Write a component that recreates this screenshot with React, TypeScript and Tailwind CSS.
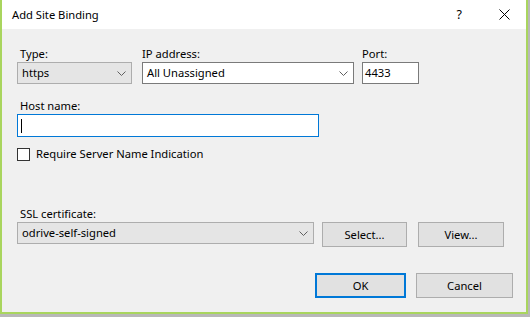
import React from 'react';

const Chevron = () => (
  <svg width="9" height="5" viewBox="0 0 9 5" className="shrink-0">
    <path d="M0.5 0.5 L4.5 4.5 L8.5 0.5" fill="none" stroke="#606060" strokeWidth="1" />
  </svg>
);

const Select = ({ value, white, className }: { value: string; white?: boolean; className: string }) => (
  <div
    className={
      'flex items-center justify-between pl-[4px] pr-[5px] border ' +
      (white ? 'bg-white border-[#7a7a7a] ' : 'bg-[#e5e5e5] border-[#adadad] ') +
      className
    }
  >
    <span>{value}</span>
    <Chevron />
  </div>
);

const Button = ({ label, primary, className }: { label: string; primary?: boolean; className: string }) => (
  <div
    className={
      'flex items-center justify-center bg-[#e1e1e1] ' +
      (primary ? 'border-2 border-[#0078d7] ' : 'border border-[#adadad] ') +
      className
    }
  >
    {label}
  </div>
);

export default function App() {
  return (
    <div
      className="w-[530px] h-[317px] bg-[#b8b8b8] overflow-hidden text-[11.2px] leading-[16px] text-black"
      style={{ fontFamily: '"Noto Sans", "Open Sans", sans-serif' }}
    >
      <div className="w-[528px] h-[314px] flex flex-col border-x-2 border-b-2 border-[#a9d55e] bg-[#f0f0f0]">
        {/* title bar */}
        <div className="h-[29px] bg-white flex items-center pl-[10px] pr-[16px]">
          <span className="flex-1">Add Site Binding</span>
          <span className="mr-[37px] text-[12.5px]">?</span>
          <svg width="11" height="11" viewBox="0 0 11 11">
            <path d="M0.5 0.5 L10.5 10.5 M10.5 0.5 L0.5 10.5" stroke="#000" strokeWidth="1" />
          </svg>
        </div>

        <div className="flex flex-col pl-[15px] pt-[17px]">
          {/* type / ip / port */}
          <div className="flex">
            <div className="flex flex-col w-[115px]">
              <span className="pl-[3px]">Type:</span>
              <Select value="https" className="h-[22px]" />
            </div>
            <div className="flex flex-col w-[212px] ml-[10px]">
              <span>IP address:</span>
              <Select value="All Unassigned" white className="h-[22px]" />
            </div>
            <div className="flex flex-col w-[57px] ml-[8px]">
              <span>Port:</span>
              <div className="h-[22px] bg-white border border-[#7a7a7a] flex items-center pl-[2px]">4433</div>
            </div>
          </div>

          {/* host name */}
          <span className="pl-[3px] mt-[14px]">Host name:</span>
          <div className="w-[302px] h-[23px] bg-white border border-[#0078d7] flex items-center pl-[3px]">
            <div className="w-[1px] h-[14px] bg-black" />
          </div>

          <div className="flex items-center mt-[9px]">
            <div className="w-[13px] h-[13px] bg-white border border-[#333333]" />
            <span className="ml-[6px]">Require Server Name Indication</span>
          </div>

          {/* ssl */}
          <span className="pl-[3px] mt-[44px]">SSL certificate:</span>
          <div className="flex items-start">
            <Select value="odrive-self-signed" className="w-[297px] h-[22px]" />
            <Button label="Select..." className="w-[85px] h-[25px] ml-[8px]" />
            <Button label="View..." className="w-[86px] h-[25px] ml-[11px]" />
          </div>

          <div className="flex mt-[26px] pl-[298px]">
            <Button label="OK" primary className="w-[91px] h-[25px]" />
            <Button label="Cancel" className="w-[97px] h-[25px] ml-[10px]" />
          </div>
        </div>
      </div>
    </div>
  );
}
